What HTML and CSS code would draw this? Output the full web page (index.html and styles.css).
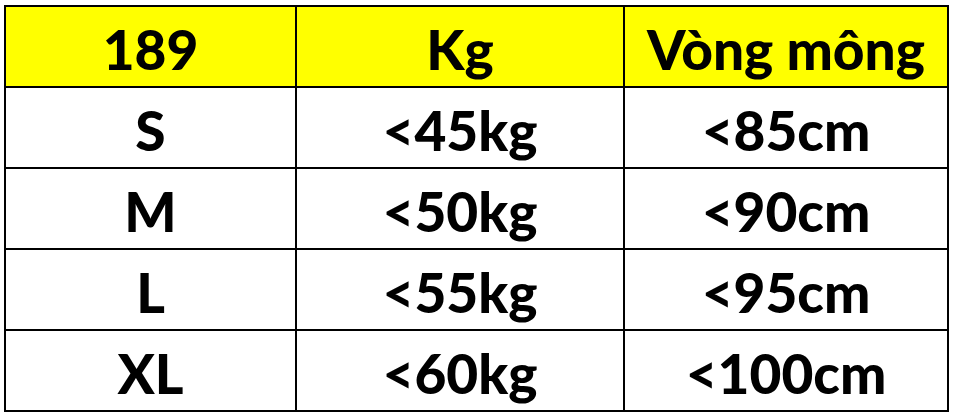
FILE: index.html
```html
<!DOCTYPE html>
<html lang="vi">
<head>
<meta charset="utf-8">
<link rel="stylesheet" href="styles.css">
</head>
<body>
<div class="sheet">
  <div class="grid">
    <div class="cell head">189</div>
    <div class="cell head">Kg</div>
    <div class="cell head">Vòng mông</div>
    <div class="cell">S</div>
    <div class="cell">&lt;45kg</div>
    <div class="cell">&lt;85cm</div>
    <div class="cell">M</div>
    <div class="cell">&lt;50kg</div>
    <div class="cell">&lt;90cm</div>
    <div class="cell">L</div>
    <div class="cell">&lt;55kg</div>
    <div class="cell">&lt;95cm</div>
    <div class="cell">XL</div>
    <div class="cell">&lt;60kg</div>
    <div class="cell">&lt;100cm</div>
  </div>
</div>
</body>
</html>
```
FILE: styles.css
```css
html, body {
  margin: 0;
  padding: 0;
  background: #ffffff;
}
.sheet {
  width: 957px;
  height: 418px;
  padding: 5px 0 0 4px;
  box-sizing: border-box;
}
.grid {
  display: grid;
  grid-template-columns: 289px 326px 322px;
  grid-template-rows: repeat(5, 79px);
  gap: 2px;
  padding: 2px;
  background: #000;
  width: max-content;
}
.cell {
  background: #fff;
  display: flex;
  align-items: center;
  justify-content: center;
  padding-top: 6px;
  box-sizing: border-box;
  font-family: Lato, "Liberation Sans", sans-serif;
  font-weight: 900;
  font-size: 55px;
  line-height: 1;
  color: #000;
}
.head {
  background: #ffff00;
}
```
